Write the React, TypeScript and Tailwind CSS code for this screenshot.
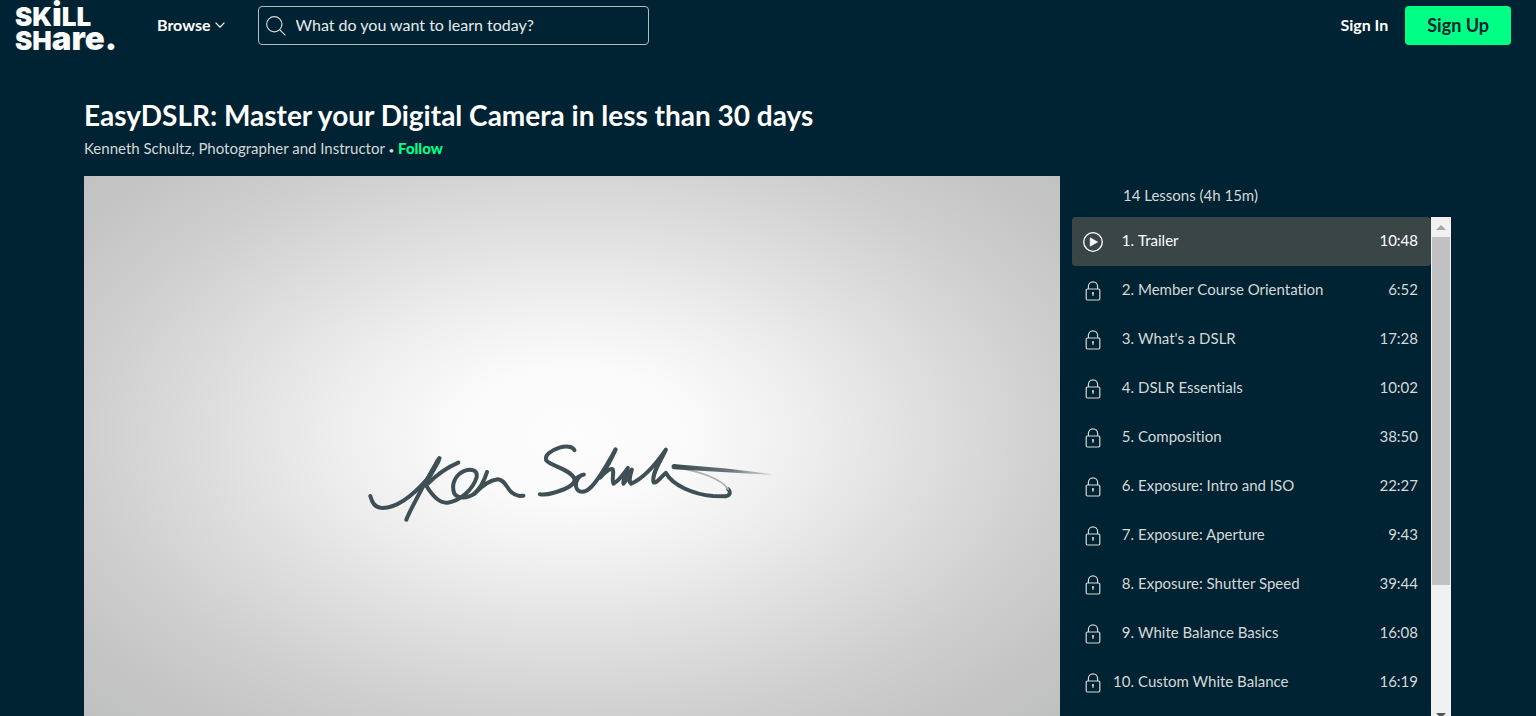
import { useState } from "react";

const lessons = [
  { title: "Trailer", time: "10:48" },
  { title: "Member Course Orientation", time: "6:52" },
  { title: "What's a DSLR", time: "17:28" },
  { title: "DSLR Essentials", time: "10:02" },
  { title: "Composition", time: "38:50" },
  { title: "Exposure: Intro and ISO", time: "22:27" },
  { title: "Exposure: Aperture", time: "9:43" },
  { title: "Exposure: Shutter Speed", time: "39:44" },
  { title: "White Balance Basics", time: "16:08" },
  { title: "Custom White Balance", time: "16:19" },
];

function LockIcon() {
  return (
    <svg width="16" height="20" viewBox="0 0 16 20" fill="none" stroke="currentColor" strokeWidth="1.2">
      <rect x="1.2" y="8" width="13.6" height="11" rx="1.2" />
      <path d="M3.4 8V5.4a4.6 4.6 0 0 1 9.2 0V8" />
      <path d="M8 11.6v3.2" strokeWidth="1.4" />
      <circle cx="8" cy="12" r="0.9" fill="currentColor" stroke="none" />
    </svg>
  );
}

function PlayIcon() {
  return (
    <svg width="20" height="20" viewBox="0 0 20 20" fill="none">
      <circle cx="10" cy="10" r="9.3" stroke="currentColor" strokeWidth="1.3" />
      <path d="M7.2 5.8v8.4l7.4-4.2z" fill="currentColor" stroke="currentColor" strokeWidth="0.6" strokeLinejoin="round" />
    </svg>
  );
}

// capitals and small letters share one height, so the small ones use a larger size
function Logo() {
  return (
    <a href="#" aria-label="Skillshare" className="w-[118px] shrink-0 font-['Inter',sans-serif] text-[26px] leading-6 font-black text-[#fbfbfb]">
      <span className="flex h-6 items-baseline">
        SK<span className="text-[33px] leading-6">i</span>LL
      </span>
      <span className="flex h-6 items-baseline">
        SH<span className="text-[33px] leading-6">are.</span>
      </span>
    </a>
  );
}

function Signature() {
  return (
    <svg viewBox="0 0 975 548" className="block w-full" role="img" aria-label="Ken Schultz">
      <defs>
        <linearGradient id="tail" x1="940" y1="0" x2="1235" y2="0" gradientUnits="userSpaceOnUse">
          <stop offset="0" stopColor="#37474d" />
          <stop offset="0.6" stopColor="#6d797d" />
          <stop offset="1" stopColor="#dcdfe0" />
        </linearGradient>
      </defs>
      <g transform="translate(275 254) scale(0.3333)" fill="none" stroke="#3f4f56" strokeWidth="12" strokeLinecap="round" strokeLinejoin="round">
        <path d="M33 197C38 215 45 232 70 233C120 232 170 185 205 145C220 125 232 100 240 84" />
        <path d="M240 84L193 165C172 205 152 240 141 268" />
        <path d="M236 92L198 160" strokeWidth="15" />
        <path d="M297 97C265 110 225 140 200 165C215 190 240 220 265 217C300 212 340 180 352 140C355 118 335 115 315 122C285 135 275 165 285 190C295 205 325 205 345 190C362 175 375 150 383 125" />
        <path d="M345 190C370 165 390 149 415 147C445 150 440 190 480 197L492 196" />
        <path d="M645 60C640 48 620 46 600 52C575 60 555 75 560 90C575 108 630 115 645 145C650 165 610 180 580 188C565 193 550 193 541 192" />
        <path d="M646 148C654 140 662 134 673 133C660 135 646 150 650 170C655 188 675 190 695 170C720 145 750 90 768 58" />
        <path d="M768 58C755 90 738 118 722 142C740 122 755 112 760 118C764 128 756 146 762 160C780 150 792 130 805 113C800 130 788 150 792 160C802 150 808 132 817 118C811 138 806 152 815 160C850 145 890 100 919 58C905 90 875 130 882 156C892 160 905 138 919 128C940 165 1000 192 1060 197L1098 198C1115 195 1112 182 1106 177" />
        <path d="M1106 177C1085 145 1020 122 945 112" stroke="#a9b0b2" strokeWidth="5" />
        <path d="M940 101L1100 115L1235 131L1235 134L1100 126L944 117Z" fill="url(#tail)" stroke="none" />
        <circle cx="944" cy="109" r="8" fill="#3f4f56" stroke="none" />
      </g>
    </svg>
  );
}

export default function App() {
  const [query, setQuery] = useState("");
  const [current, setCurrent] = useState(0);

  return (
    <div className="h-screen overflow-hidden bg-[#002333] font-['Lato',sans-serif] text-[#d5d8d8] [font-variant-ligatures:none]">
      <header className="flex h-[51px] items-center pr-[25px] pl-[15px]">
        <Logo />
        <button className="ml-6 flex items-center gap-1 pb-0.5 text-base font-bold text-white">
          Browse
          <svg width="10" height="6" viewBox="0 0 10 6" fill="none" stroke="currentColor" strokeWidth="1.2">
            <path d="M0.6 0.6L5 5.2L9.4 0.6" />
          </svg>
        </button>
        <label className="ml-[33px] flex h-[39px] w-full max-w-[391px] items-center gap-2 rounded border border-[#b4bcc0] px-[7px]">
          <svg width="20" height="20" viewBox="0 0 20 20" fill="none" stroke="currentColor" strokeWidth="1.2" className="shrink-0">
            <circle cx="8.3" cy="8.3" r="7.6" />
            <path d="M13.8 13.8L19.4 19.4" />
          </svg>
          <input
            type="text"
            aria-label="Search"
            placeholder="What do you want to learn today?"
            value={query}
            onChange={(e) => setQuery(e.target.value)}
            className="w-full bg-transparent pb-0.5 pl-0.5 text-base text-white outline-none placeholder:text-[#e8eaea]"
          />
        </label>
        <nav className="ml-auto flex items-center gap-[17px] font-bold whitespace-nowrap">
          <a href="#" className="pb-0.5 text-base text-white">
            Sign In
          </a>
          <button className="h-[39px] rounded bg-[#00ff84] px-[22px] pb-0.5 text-lg text-[#002333]">Sign Up</button>
        </nav>
      </header>

      <main className="pt-12 pr-[85px] pl-[84px]">
        <h1 className="text-[28px] leading-8 font-bold text-white">
          EasyDSLR: Master your Digital Camera in less than 30 days
        </h1>
        <p className="mt-1 text-[15px] leading-[26px]">
          Kenneth Schultz, Photographer and Instructor <span className="text-[10px] leading-none">•</span>{" "}
          <a href="#" className="font-black text-[#00ff84]">
            Follow
          </a>
        </p>

        <div className="mt-[15px] flex items-start gap-3">
          <div className="min-w-0 flex-1 bg-[radial-gradient(ellipse_at_50%_47%,#fdfdfd_0%,#fafafa_17%,#eeeeee_34%,#dedede_52%,#cecfce_70%,#c6c6c6_84%,#bebfbf_100%)]">
            <Signature />
          </div>

          <aside className="w-[379px] shrink-0">
            <h2 className="flex h-[41px] items-center pb-[3px] pl-[51px] text-[15px]">14 Lessons (4h 15m)</h2>
            <div className="flex">
              <ol className="flex-1">
                {lessons.map((lesson, i) => (
                  <li key={lesson.title}>
                    <button
                      onClick={() => setCurrent(i)}
                      className={`flex h-[49px] w-full items-center rounded pr-[13px] text-[15px] ${
                        i === current ? "bg-[#3a4646] text-white" : ""
                      }`}
                    >
                      <span className="flex w-[41px] justify-center">
                        {i === 0 ? <PlayIcon /> : <LockIcon />}
                      </span>
                      <span className="flex flex-1 pb-0.5">
                        <span className="w-[21px] text-right">{i + 1}.</span>
                        <span className="ml-1">{lesson.title}</span>
                        <span className="ml-auto">{lesson.time}</span>
                      </span>
                    </button>
                  </li>
                ))}
              </ol>
              <div className="flex h-[516px] w-5 flex-col items-center bg-[#f1f1f1]">
                <svg width="20" height="20" viewBox="0 0 20 20" fill="#a3a8a8">
                  <path d="M5 13L10 8L15 13Z" />
                </svg>
                <div className="h-[348px] w-[18px] bg-[#c1c1c1]" />
                <svg width="20" height="20" viewBox="0 0 20 20" fill="#505558" className="mt-auto">
                  <path d="M5 0L10 5L15 0Z" />
                </svg>
              </div>
            </div>
          </aside>
        </div>
      </main>
    </div>
  );
}
